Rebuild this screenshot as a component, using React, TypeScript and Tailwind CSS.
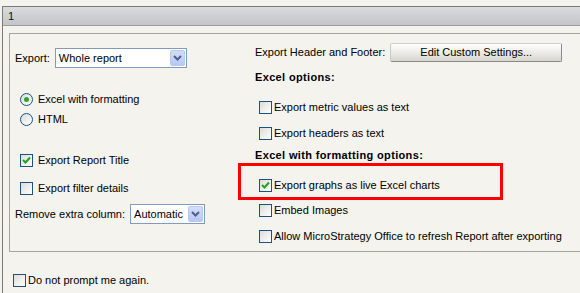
import React from "react";

function Check({ checked }: { checked?: boolean }) {
  return (
    <span className="w-[13px] h-[13px] border border-[#1c5180] bg-gradient-to-br from-[#dcdcd7] to-white flex items-center justify-center shrink-0">
      {checked && (
        <svg width="9" height="9" viewBox="0 0 9 9">
          <polyline points="1,4 3.5,6.5 8,1.5" fill="none" stroke="#21a121" strokeWidth="2" />
        </svg>
      )}
    </span>
  );
}

function Radio({ checked }: { checked?: boolean }) {
  return (
    <span className="w-[13px] h-[13px] rounded-full border border-[#1c5180] bg-gradient-to-br from-[#dcdcd7] to-white flex items-center justify-center shrink-0">
      {checked && <span className="w-[5px] h-[5px] rounded-full bg-[#2fa32f]" />}
    </span>
  );
}

function Select({ value, width }: { value: string; width: string }) {
  return (
    <div className={`${width} h-[20px] border border-[#7f9db9] bg-white flex items-center justify-between pl-[3px] pr-[1px]`}>
      <span>{value}</span>
      <span className="w-[15px] h-[16px] rounded-[2px] border border-[#b9c9f0] bg-gradient-to-b from-[#d2ddfb] to-[#b6c8f6] flex items-center justify-center">
        <svg width="9" height="6" viewBox="0 0 9 6">
          <polyline points="1,1 4.5,4.5 8,1" fill="none" stroke="#4d6185" strokeWidth="2" />
        </svg>
      </span>
    </div>
  );
}

function CheckRow({ label, checked, gap, h = "h-[16px]", mt }: { label: string; checked?: boolean; gap: string; h?: string; mt: string }) {
  return (
    <div className={`flex items-center ${gap} ${h} ${mt}`}>
      <Check checked={checked} />
      <span>{label}</span>
    </div>
  );
}

export default function App() {
  return (
    <div
      className="relative w-[580px] h-[293px] bg-[#f4f3ee] overflow-hidden text-[11px] text-black pt-[6px]"
      style={{ fontFamily: '"Liberation Sans", Arial, sans-serif' }}
    >
      <div className="ml-[2px] w-[600px] h-[300px] border-l border-t border-[#7b7b7b]">
        <div className="h-[19px] border-b border-[#9c9c9c] bg-gradient-to-b from-[#d9dbdd] to-[#c3c5c8] flex items-center pl-[5px] text-[#0a0a3a]">
          1
        </div>
        <div className="ml-[6px] mt-[7px] w-[640px] h-[219px] border-l border-t border-b border-[#a5a5a0] flex">
          {/* left column */}
          <div className="w-[240px] pl-[5px] flex flex-col">
            <div className="mt-[14px] flex items-center gap-[5px]">
              <span>Export:</span>
              <Select value="Whole report" width="w-[132px]" />
            </div>
            <div className="mt-[23px] ml-[5px] h-[16px] flex items-center gap-[5px]">
              <Radio checked />
              <span>Excel with formatting</span>
            </div>
            <div className="mt-[4px] ml-[5px] h-[16px] flex items-center gap-[5px]">
              <Radio />
              <span>HTML</span>
            </div>
            <div className="ml-[5px]">
              <CheckRow label="Export Report Title" checked gap="gap-[5px]" mt="mt-[25px]" />
              <CheckRow label="Export filter details" gap="gap-[5px]" mt="mt-[12px]" />
            </div>
            <div className="mt-[8px] flex items-center gap-[5px]">
              <span>Remove extra column:</span>
              <Select value="Automatic" width="w-[75px]" />
            </div>
          </div>
          {/* right column */}
          <div className="pl-[5px] flex flex-col">
            <div className="mt-[9px] flex items-center gap-[5px]">
              <span>Export Header and Footer:</span>
              <button className="w-[172px] h-[19px] border border-[#8a8a8a] border-t-[#d0d0d0] border-l-[#c8c8c8] rounded-[2px] bg-gradient-to-b from-white via-[#ecebe6] to-[#d6d5d0] text-[11px]">
                Edit Custom Settings...
              </button>
            </div>
            <div className="mt-[8px] h-[14px] flex items-center font-bold tracking-[0.35px]">Excel options:</div>
            <div className="ml-[4px]">
              <CheckRow label="Export metric values as text" gap="gap-[2px]" mt="mt-[15px]" />
              <CheckRow label="Export headers as text" gap="gap-[2px]" mt="mt-[10px]" />
            </div>
            <div className="mt-[7px] h-[14px] flex items-center font-bold tracking-[0.35px]">Excel with formatting options:</div>
            <div className="ml-[4px]">
              <CheckRow label="Export graphs as live Excel charts" checked gap="gap-[2px]" mt="mt-[15px]" />
              <CheckRow label="Embed Images" gap="gap-[2px]" mt="mt-[9px]" />
              <CheckRow label="Allow MicroStrategy Office to refresh Report after exporting" gap="gap-[2px]" mt="mt-[10px]" />
            </div>
          </div>
        </div>
        <div className="ml-[10px] mt-[20px]">
          <CheckRow label="Do not prompt me again." gap="gap-[2px]" mt="mt-0" />
        </div>
      </div>
      <div className="absolute left-[238px] top-[163px] w-[265px] h-[37px] border-[3px] border-[#ff0000] pointer-events-none" />
    </div>
  );
}
